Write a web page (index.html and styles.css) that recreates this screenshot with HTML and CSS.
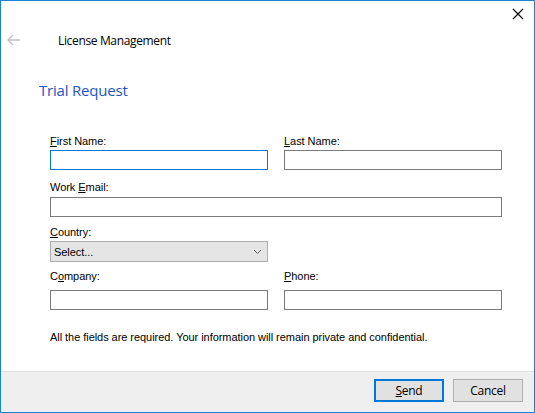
FILE: index.html
```html
<!DOCTYPE html>
<html lang="en">
<head>
<meta charset="utf-8">
<title>License Management</title>
<link rel="stylesheet" href="styles.css">
</head>
<body>
<div class="window">
  <button class="close" aria-label="Close">
    <svg width="12" height="12" viewBox="0 0 12 12"><path d="M1 1 L11 11 M11 1 L1 11" stroke="#000" stroke-width="1.1" fill="none"/></svg>
  </button>
  <div class="header">
    <svg class="back" width="14" height="12" viewBox="0 0 14 12"><path d="M1 6 H13 M6 1 L1 6 L6 11" stroke="#c4c4c4" stroke-width="1.4" fill="none"/></svg>
    <span class="title">License Management</span>
  </div>
  <div class="content">
    <h1 class="heading">Trial Request</h1>
    <div class="row row-name">
      <div class="field"><label class="label"><u>F</u>irst Name:</label><div class="input input-focus"></div></div>
      <div class="field"><label class="label"><u>L</u>ast Name:</label><div class="input"></div></div>
    </div>
    <div class="row row-email">
      <div class="field field-wide"><label class="label label-email">Work <u>E</u>mail:</label><div class="input"></div></div>
    </div>
    <div class="row row-country">
      <div class="field"><label class="label"><u>C</u>ountry:</label>
        <div class="select"><span>Select...</span>
          <svg class="chevron" width="9" height="6" viewBox="0 0 9 6"><path d="M1 1 L4.5 4.5 L8 1" stroke="#606060" stroke-width="1" fill="none"/></svg>
        </div>
      </div>
    </div>
    <div class="row row-company">
      <div class="field"><label class="label label-company">C<u>o</u>mpany:</label><div class="input"></div></div>
      <div class="field"><label class="label label-company"><u>P</u>hone:</label><div class="input"></div></div>
    </div>
    <p class="note">All the fields are required. Your information will remain private and confidential.</p>
  </div>
  <div class="footer">
    <button class="btn btn-primary"><u>S</u>end</button>
    <button class="btn">Cancel</button>
  </div>
</div>
</body>
</html>
```
FILE: styles.css
```css
html, body {
  margin: 0;
  padding: 0;
  background: #fff;
}
.window {
  position: relative;
  width: 535px;
  height: 413px;
  box-sizing: border-box;
  border: 1px solid #1883d7;
  background: #fff;
  display: flex;
  flex-direction: column;
  overflow: hidden;
}
.close {
  position: absolute;
  top: 7px;
  left: 511px;
  width: 12px;
  height: 12px;
  padding: 0;
  border: 0;
  background: none;
  display: block;
}
.close svg { display: block; }
.header {
  margin-top: 25px;
  height: 30px;
  display: flex;
  align-items: center;
  padding-left: 6px;
}
.back { display: block; margin-top: -2px; }
.title {
  margin-left: 37px;
  font-family: "Open Sans", "Noto Sans", sans-serif;
  font-size: 12px;
  letter-spacing: -0.35px;
  line-height: 16px;
  color: #000;
}
.content {
  flex: 1;
  padding-left: 49px;
}
.heading {
  margin: 24px 0 0 -11px;
  font-family: "Open Sans", "Noto Sans", sans-serif;
  font-weight: 400;
  font-size: 15px;
  letter-spacing: -0.2px;
  line-height: 20px;
  color: #1d55c4;
}
.row {
  display: grid;
  grid-template-columns: 218px 218px;
  column-gap: 16px;
}
.row-name { margin-top: 35px; }
.row-email { margin-top: 11px; }
.row-country { margin-top: 9px; }
.row-company { margin-top: 8px; }
.field-wide { grid-column: 1 / 3; }
.label {
  display: block;
  font-family: "Liberation Sans", Arial, sans-serif;
  font-size: 11px;
  letter-spacing: -0.05px;
  line-height: 13px;
  color: #000;
  margin-bottom: 2px;
}
.label-email { margin-bottom: 3px; }
.label-company { margin-bottom: 7px; }
.label u { text-underline-offset: 1px; }
.input {
  height: 20px;
  box-sizing: border-box;
  border: 1px solid #7a7a7a;
  background: #fff;
}
.input-focus { border-color: #0078d7; }
.select {
  height: 21px;
  box-sizing: border-box;
  border: 1px solid #adadad;
  background: #e5e5e5;
  display: flex;
  align-items: center;
  justify-content: space-between;
  padding: 0 5px 0 3px;
  font-family: "Liberation Sans", Arial, sans-serif;
  font-size: 11px;
  letter-spacing: -0.05px;
  color: #000;
}
.chevron { display: block; }
.note {
  margin: 21px 0 0;
  font-family: "Liberation Sans", Arial, sans-serif;
  font-size: 11px;
  letter-spacing: -0.05px;
  line-height: 13px;
  color: #000;
}
.footer {
  height: 41px;
  box-sizing: border-box;
  border-top: 1px solid #dfdfdf;
  background: #efefef;
  display: flex;
  justify-content: flex-end;
  align-items: flex-start;
  gap: 9px;
  padding: 7px 11px 0 0;
}
.btn {
  width: 70px;
  height: 23px;
  box-sizing: border-box;
  border: 1px solid #adadad;
  background: #e1e1e1;
  font-family: "Open Sans", "Noto Sans", sans-serif;
  font-size: 12px;
  letter-spacing: -0.3px;
  color: #000;
  padding: 0;
  line-height: 19px;
}
.btn-primary {
  border: 2px solid #0078d7;
  line-height: 17px;
}
```
